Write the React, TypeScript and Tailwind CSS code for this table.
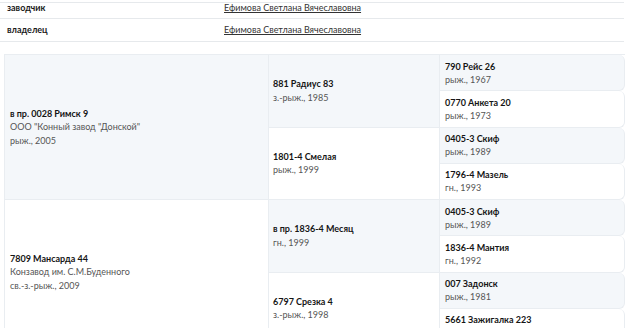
const font = { fontFamily: "Lato, 'Open Sans', sans-serif" };

type Horse = { name: string; lines: string[] };

function Cell({ h, bg, pad, horse }: { h: string; bg: string; pad: string; horse: Horse }) {
  return (
    <div className={`${h} ${bg} ${pad} flex flex-col justify-center border-b border-[#e9edf1]`}>
      <div className="text-[9px] leading-[13.5px] font-bold text-[#151515]">{horse.name}</div>
      {horse.lines.map((l) => (
        <div key={l} className="text-[9px] leading-[13.5px] text-[#555]">
          {l}
        </div>
      ))}
    </div>
  );
}

const col1: Horse[] = [
  { name: "в пр. 0028 Римск 9", lines: ['ООО "Конный завод "Донской"', "рыж., 2005"] },
  { name: "7809 Мансарда 44", lines: ["Конзавод им. С.М.Буденного", "св.-з.-рыж., 2009"] },
];
const col2: Horse[] = [
  { name: "881 Радиус 83", lines: ["з.-рыж., 1985"] },
  { name: "1801-4 Смелая", lines: ["рыж., 1999"] },
  { name: "в пр. 1836-4 Месяц", lines: ["гн., 1999"] },
  { name: "6797 Срезка 4", lines: ["з.-рыж., 1998"] },
];
const col3: Horse[] = [
  { name: "790 Рейс 26", lines: ["рыж., 1967"] },
  { name: "0770 Анкета 20", lines: ["рыж., 1973"] },
  { name: "0405-3 Скиф", lines: ["рыж., 1989"] },
  { name: "1796-4 Мазель", lines: ["гн., 1993"] },
  { name: "0405-3 Скиф", lines: ["рыж., 1989"] },
  { name: "1836-4 Мантия", lines: ["гн., 1992"] },
  { name: "007 Задонск", lines: ["рыж., 1981"] },
  { name: "5661 Зажигалка 223", lines: ["рыж., 1986"] },
];

export default function App() {
  return (
    <div className="w-[640px] h-[328px] overflow-hidden bg-white" style={font}>
      <div className="w-[624px] pt-[2px]">
        <div className="border-t border-[#e6e9ec] h-[17px] flex items-center pb-[5px] border-b">
          <div className="w-[224px] pl-[7px] text-[9px] font-bold text-[#1a1a1a]">заводчик</div>
          <a className="text-[9px] text-[#333] underline">Ефимова Светлана Вячеславовна</a>
        </div>
        <div className="h-[23px] flex items-center border-b border-[#e6e9ec]">
          <div className="w-[224px] pl-[7px] text-[9px] font-bold text-[#1a1a1a]">владелец</div>
          <a className="text-[9px] text-[#333] underline">Ефимова Светлана Вячеславовна</a>
        </div>
      </div>

      <div className="ml-[4px] mt-[12px] w-[621px] flex border-t border-l border-[#e9edf1]">
        <div className="w-[264px] flex flex-col border-r border-[#e9edf1]">
          {col1.map((h, i) => (
            <Cell key={i} h="h-[145px] shrink-0" bg={i % 2 ? "bg-white" : "bg-[#f4f7fa]"} pad="pl-[5px]" horse={h} />
          ))}
        </div>
        <div className="w-[171px] flex flex-col border-r border-[#e9edf1]">
          {col2.map((h, i) => (
            <Cell key={i} h="h-[72.5px] shrink-0" bg={i % 2 ? "bg-white" : "bg-[#f4f7fa]"} pad="pl-[4px]" horse={h} />
          ))}
        </div>
        <div className="flex-1 flex flex-col">
          {col3.map((h, i) => (
            <div key={i} className={`h-[36.25px] shrink-0 ${i % 2 ? "bg-white" : "bg-[#f4f7fa]"} rounded-r-[6px] border-b border-r border-[#e9edf1] pl-[5px] flex flex-col justify-center`}>
              <div className="text-[9px] leading-[13px] font-bold text-[#151515]">{h.name}</div>
              <div className="text-[9px] leading-[13px] text-[#555]">{h.lines[0]}</div>
            </div>
          ))}
        </div>
      </div>
    </div>
  );
}
